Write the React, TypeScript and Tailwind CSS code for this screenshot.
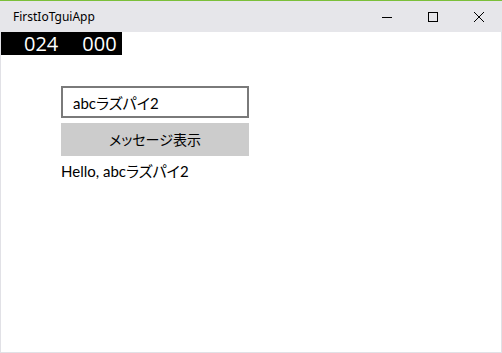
import React, { useState } from "react";

export default function App() {
  const [name, setName] = useState("abcラズパイ2");
  const [greeting, setGreeting] = useState("Hello, abcラズパイ2");

  return (
    <div
      className="flex h-[353px] w-[502px] flex-col overflow-hidden bg-white [font-feature-settings:'palt']"
      style={{ fontFamily: 'Lato, "Noto Sans CJK JP", sans-serif' }}
    >
      {/* タイトルバー */}
      <div className="flex h-[32px] shrink-0 items-center border-t border-[#7bbf3a] bg-[#e6e6ea]">
        <span
          className="pl-[13px] text-[12px] text-black"
          style={{ fontFamily: '"Noto Sans", sans-serif' }}
        >
          FirstIoTguiApp
        </span>
        <div className="ml-auto flex h-full">
          <button className="flex w-[46px] items-center justify-center">
            <svg width="10" height="10" viewBox="0 0 10 10">
              <path d="M0 5.5h10" stroke="#000" strokeWidth="1" />
            </svg>
          </button>
          <button className="flex w-[46px] items-center justify-center">
            <svg width="10" height="10" viewBox="0 0 10 10">
              <rect x="0.5" y="0.5" width="9" height="9" fill="none" stroke="#000" strokeWidth="1" />
            </svg>
          </button>
          <button className="flex w-[46px] items-center justify-center">
            <svg width="10" height="10" viewBox="0 0 10 10">
              <path d="M0 0L10 10M10 0L0 10" stroke="#000" strokeWidth="1" />
            </svg>
          </button>
        </div>
      </div>

      {/* 本体 */}
      <div className="flex flex-1 flex-col border-x border-b border-[#e1e1e6]">
        <div
          className="flex h-[23px] w-[121px] items-center bg-black text-[20px] font-medium leading-none text-white"
          style={{ fontFamily: '"Open Sans", sans-serif' }}
        >
          <span className="pl-[23px]">024</span>
          <span className="pl-[24px]">000</span>
        </div>

        <div className="flex w-[188px] flex-col pl-[60px] pt-[31px]">
          <input
            value={name}
            onChange={(e) => setName(e.target.value)}
            className="h-[32px] w-[188px] border-2 border-[#7a7a7a] px-[10px] text-[15px] text-black outline-none"
          />
          <button
            onClick={() => setGreeting("Hello, " + name)}
            className="mt-[5px] h-[33px] w-[188px] bg-[#cccccc] text-[14px] text-black"
          >
            メッセージ表示
          </button>
          <p className="mt-[4px] whitespace-nowrap text-[15px] text-black">{greeting}</p>
        </div>
      </div>
    </div>
  );
}
